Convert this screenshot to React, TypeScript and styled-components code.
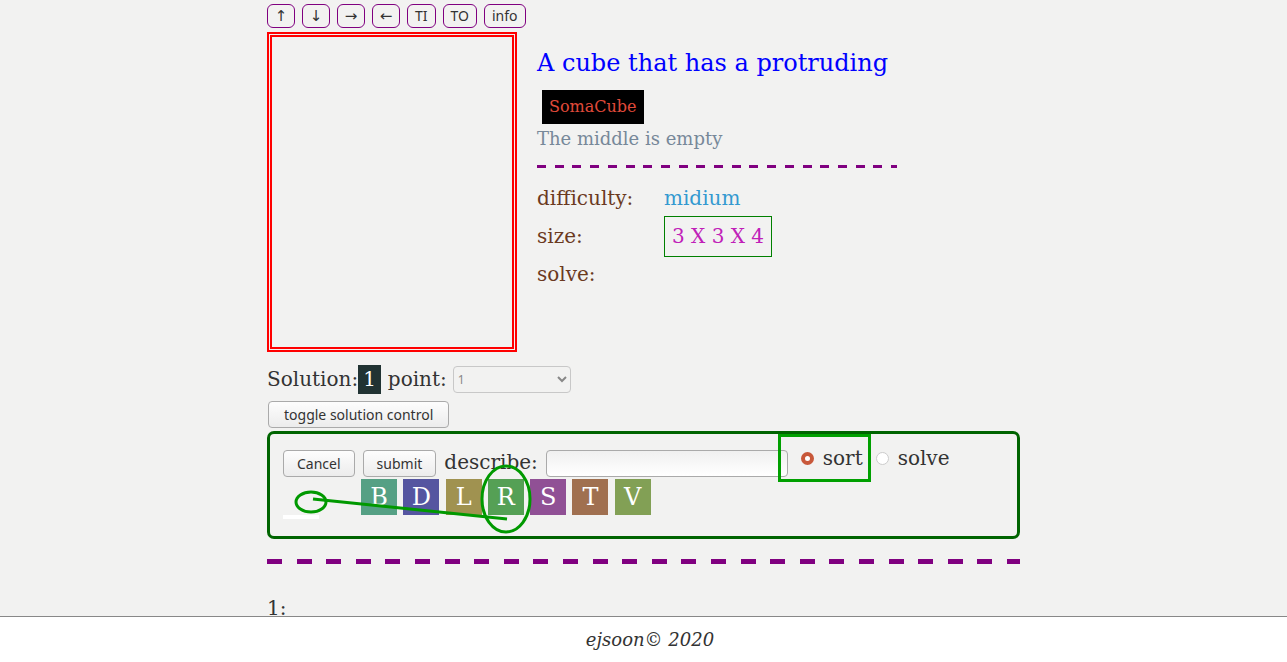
import React from "react";
import styled, {createGlobalStyle} from "styled-components";

const Global = createGlobalStyle`
    html, body {
        margin: 0;
        padding: 0;
        background: #f2f2f1;
        font-family: "DejaVu Serif", serif;
    }
`

const Page = styled.div`
    width: 753px;
    margin: 0 auto;
    padding-top: 4px;
    padding-bottom: 60px;
`

const ToolBar = styled.div`
    display: flex;
    gap: 7px;
    height: 24px;
`

const ToolButton = styled.button<{ $arrow?: boolean }>`
    font-family: ${p => p.$arrow ? '"DejaVu Sans", sans-serif' : '"Noto Sans", sans-serif'};
    font-size: ${p => p.$arrow ? 15 : 14}px;
    color: #333;
    background: transparent;
    border: 1px solid purple;
    border-radius: 6px;
    padding: 0 ${p => p.$arrow ? 6 : 7}px;
    min-width: 28px;
    height: 24px;
    line-height: 20px;
`

const Top = styled.div`
    display: flex;
    margin-top: 4px;
`

const Preview = styled.div`
    width: 240px;
    height: 310px;
    border: 5px double red;
    flex: none;
`

const Info = styled.div`
    padding-left: 20px;
    padding-top: 16px;
    display: flex;
    flex-direction: column;
    align-items: flex-start;
`

const Title = styled.div`
    color: blue;
    font-size: 24px;
    line-height: 30px;
`

const Tag = styled.span`
    background: #000;
    color: #e04a3a;
    font-size: 16px;
    padding: 0 7px;
    height: 34px;
    line-height: 34px;
    margin: 12px 0 0 5px;
`

const Desc = styled.div`
    color: #778899;
    font-size: 18px;
    line-height: 24px;
    margin-top: 3px;
`

const Dash = styled.div<{ $w: number, $t: number, $dash: number, $period: number }>`
    width: ${p => p.$w}px;
    height: ${p => p.$t}px;
    background: repeating-linear-gradient(90deg,
    purple 0 ${p => p.$dash}px,
    transparent ${p => p.$dash}px ${p => p.$period}px);
`

const Props = styled.div`
    display: grid;
    grid-template-columns: 127px auto;
    grid-auto-rows: 38px;
    align-items: center;
    margin-top: 11px;
    font-size: 20px;
`

const Label = styled.div`
    color: #6b3a1f;
    line-height: 38px;
`

const Value = styled.div<{ $color: string }>`
    color: ${p => p.$color};
`

const SizeBox = styled.span`
    display: inline-block;
    border: 1px solid green;
    padding: 0 7px;
    height: 39px;
    line-height: 39px;
    color: #c020b8;
`

const SolutionRow = styled.div`
    display: flex;
    align-items: center;
    margin-top: 12px;
    font-size: 20px;
    color: #333;
    height: 30px;
`

const Num = styled.span`
    background: #213333;
    color: #fff;
    padding: 0 5px;
    height: 29px;
    line-height: 29px;
    margin-right: 7px;
`

const Select = styled.select`
    margin-left: 6px;
    width: 118px;
    height: 27px;
    font-size: 12px;
    color: #888;
    border: 1px solid #c8c8c8;
    border-radius: 4px;
    background: #f2f2f1;
    font-family: "Noto Sans", sans-serif;
`

const Button = styled.button`
    font-family: "Noto Sans", sans-serif;
    font-size: 14px;
    color: #333;
    background: linear-gradient(#fdfdfd, #ececec);
    border: 1px solid #aaa;
    border-radius: 4px;
    height: 27px;
    padding: 0 13px;
`

const ToggleButton = styled(Button)`
    margin-top: 7px;
    margin-left: 1px;
    padding: 0 15px;
    display: block;
`

const Control = styled.div`
    position: relative;
    margin-top: 3px;
    border: 3px solid #006400;
    border-radius: 7px;
    box-sizing: border-box;
    height: 108px;
    padding: 0 13px;
`

const ControlRow = styled.div`
    display: flex;
    align-items: flex-start;
`

const RowButton = styled(Button)`
    margin-top: 16px;
    margin-right: 8px;
`

const Describe = styled.span`
    font-size: 20px;
    color: #333;
    margin-top: 15px;
    line-height: 26px;
`

const Input = styled.input`
    margin: 16px 0 0 8px;
    width: 242px;
    height: 27px;
    box-sizing: border-box;
    border: 1px solid #aaa;
    border-radius: 4px;
    background: linear-gradient(#f0f0f0, #fff);
`

const RadioBox = styled.label<{ $framed?: boolean }>`
    display: flex;
    align-items: center;
    gap: 5px;
    height: 48px;
    box-sizing: border-box;
    padding: 0 5px 0 ${p => p.$framed ? 20 : 0}px;
    border: ${p => p.$framed ? "3px solid #00a000" : "none"};
    margin-left: ${p => p.$framed ? -10 : 5}px;
    font-size: 20px;
    color: #333;
`

const Dot = styled.span<{ $on?: boolean }>`
    width: 13px;
    height: 13px;
    border-radius: 50%;
    box-sizing: border-box;
    margin-right: 4px;
    background: #fff;
    border: ${p => p.$on ? "4px solid #c8583a" : "1px solid #ccc"};
`

const TileRow = styled.div`
    display: flex;
    align-items: flex-end;
    margin-top: -3px;
`

const Bar = styled.div`
    width: 36px;
    height: 4px;
    background: #fff;
    margin-right: 42px;
`

const Tiles = styled.div`
    display: flex;
    gap: 6.3px;
    margin-bottom: 4px;
`

const Tile = styled.div<{ $bg: string }>`
    width: 36px;
    height: 36px;
    background: ${p => p.$bg};
    color: #fff;
    font-size: 24px;
    line-height: 36px;
    text-align: center;
`

const Overlay = styled.svg`
    position: absolute;
    left: -3px;
    top: -3px;
    pointer-events: none;
`

const BigDash = styled.div`
    margin-top: 20px;
`

const Item = styled.div`
    margin-top: 32px;
    font-size: 20px;
    color: #333;
`

const Footer = styled.footer`
    position: fixed;
    left: 0;
    right: 0;
    bottom: 0;
    height: 45px;
    background: #fff;
    border-top: 1px solid #888;
    text-align: center;
    font-style: italic;
    font-size: 18px;
    color: #333;
    line-height: 45px;
    padding-left: 13px;
`

const tiles: [string, string][] = [
    ["B", "#55a084"],
    ["D", "#5555a0"],
    ["L", "#a09250"],
    ["R", "#55a055"],
    ["S", "#905095"],
    ["T", "#a07050"],
    ["V", "#82a055"],
]

const tools = ["↑", "↓", "→", "←", "TI", "TO", "info"]

export default function App() {
    return (
        <>
            <Global/>
            <Page>
                <ToolBar>
                    {tools.map((t, i) => <ToolButton key={t} $arrow={i < 4}>{t}</ToolButton>)}
                </ToolBar>
                <Top>
                    <Preview/>
                    <Info>
                        <Title>A cube that has a protruding</Title>
                        <Tag>SomaCube</Tag>
                        <Desc>The middle is empty</Desc>
                        <div style={{marginTop: 14}}><Dash $w={360} $t={3} $dash={9} $period={17.7}/></div>
                        <Props>
                            <Label>difficulty:</Label>
                            <Value $color="#3399d0">midium</Value>
                            <Label>size:</Label>
                            <Value $color="#c020b8"><SizeBox>3 X 3 X 4</SizeBox></Value>
                            <Label>solve:</Label>
                            <Value $color="#333"/>
                        </Props>
                    </Info>
                </Top>
                <SolutionRow>
                    Solution:<Num>1</Num>point:
                    <Select defaultValue="1"><option>1</option></Select>
                </SolutionRow>
                <ToggleButton>toggle solution control</ToggleButton>
                <Control>
                    <ControlRow>
                        <RowButton>Cancel</RowButton>
                        <RowButton>submit</RowButton>
                        <Describe>describe:</Describe>
                        <Input/>
                        <RadioBox $framed><Dot $on/>sort</RadioBox>
                        <RadioBox><Dot/>solve</RadioBox>
                    </ControlRow>
                    <TileRow>
                        <Bar/>
                        <Tiles>
                            {tiles.map(([l, c]) => <Tile key={l} $bg={c}>{l}</Tile>)}
                        </Tiles>
                    </TileRow>
                    <Overlay width="753" height="108">
                        <g fill="none" stroke="#009900" strokeWidth="3">
                            <ellipse cx="44" cy="71" rx="15" ry="10"/>
                            <line x1="46" y1="68" x2="240" y2="88"/>
                            <ellipse cx="239" cy="68" rx="24" ry="33"/>
                        </g>
                    </Overlay>
                </Control>
                <BigDash><Dash $w={753} $t={5} $dash={15} $period={29.6}/></BigDash>
                <Item>1:</Item>
            </Page>
            <Footer>ejsoon© 2020</Footer>
        </>
    );
}
